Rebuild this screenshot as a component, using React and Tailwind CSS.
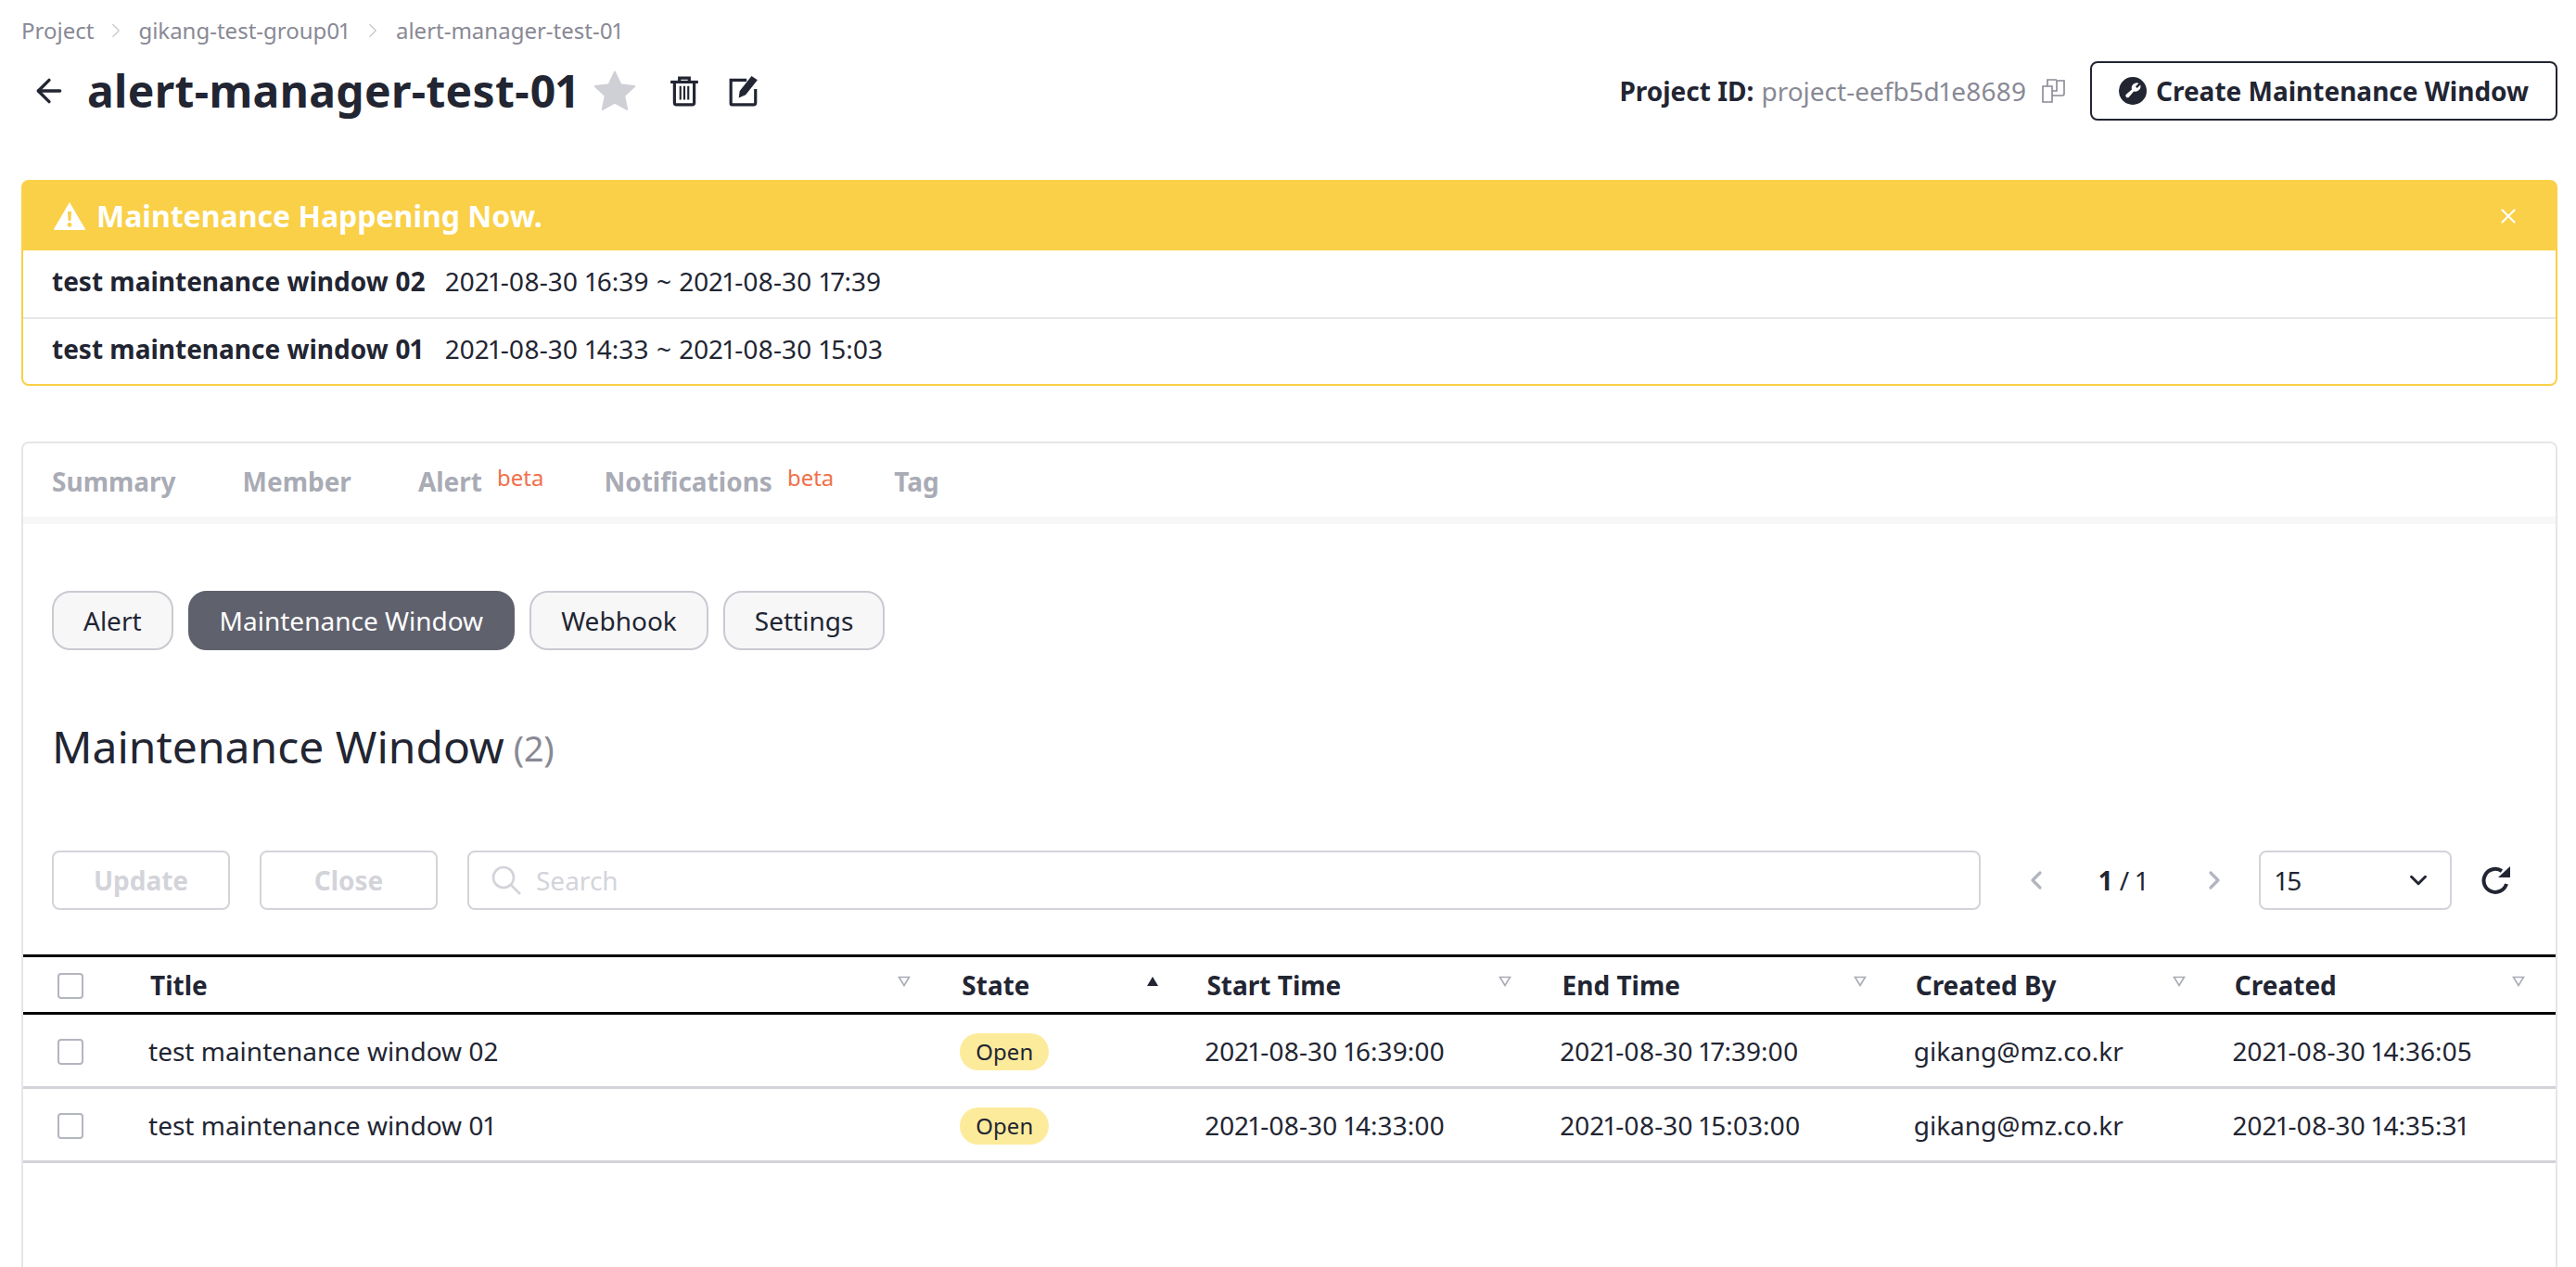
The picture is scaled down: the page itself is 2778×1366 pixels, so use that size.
// Maintenance window tab of a project page
import { ChevronLeft, ChevronRight, ChevronDown, ArrowLeft, X } from 'lucide-react'

const WINDOWS = [
  ['test maintenance window 02', '2021-08-30 16:39 ~ 2021-08-30 17:39'],
  ['test maintenance window 01', '2021-08-30 14:33 ~ 2021-08-30 15:03'],
]

const ROWS = [
  ['test maintenance window 02', '2021-08-30 16:39:00', '2021-08-30 17:39:00', 'gikang@mz.co.kr', '2021-08-30 14:36:05'],
  ['test maintenance window 01', '2021-08-30 14:33:00', '2021-08-30 15:03:00', 'gikang@mz.co.kr', '2021-08-30 14:35:31'],
]

const COLUMNS = [
  ['Title', 'w-[875px] pr-[38px]'],
  ['State', 'w-[264px] pr-[34px]', true],
  ['Start Time', 'w-[383px] pr-[38px]'],
  ['End Time', 'w-[381px] pr-[36px]'],
  ['Created By', 'w-[344px] pr-[36px]'],
  ['Created', 'w-[363px] pr-[33px]'],
]

function SortMark({ active }) {
  return (
    <svg viewBox="0 0 14 12" className="mt-[-8px] h-[12px] w-[14px] shrink-0" aria-hidden="true">
      {active ? (
        <path d="M7 1 L13 11 H1 Z" fill="#222532" />
      ) : (
        <path d="M1.5 1.5 H12.5 L7 10.5 Z" fill="none" stroke="#a9abb5" strokeWidth="1.6" />
      )}
    </svg>
  )
}

function Checkbox() {
  return <span className="mt-[2px] block h-[28px] w-[28px] rounded-[4px] border-2 border-[#b3b5bf] bg-white" />
}

function Pill({ children, active }) {
  return (
    <button
      className={`flex h-[64px] items-center rounded-[20px] border-2 px-[32px] text-[28px] ${
        active ? 'border-[#5f616d] bg-[#5f616d] text-white' : 'border-[#c9cad1] bg-[#f7f7f8] text-[#222532]'
      }`}
    >
      {children}
    </button>
  )
}

function Tab({ children, beta }) {
  return (
    <div className="flex items-start">
      <span className="text-[28px] leading-[38px] font-bold text-[#a9abb5]">{children}</span>
      {beta && <span className="ml-[16px] mr-[-7px] mt-[-2px] text-[24px] leading-[34px] text-[#f0704a]">beta</span>}
    </div>
  )
}

function GhostButton({ children }) {
  return (
    <button className="flex h-[64px] w-[192px] items-center justify-center rounded-[8px] border-2 border-[#d3d4da] text-[28px] font-bold text-[#d3d4da]">
      {children}
    </button>
  )
}

export default function App() {
  return (
    <div className="flex h-screen flex-col overflow-hidden bg-white pl-[23px] pr-[20px] text-[#222532] proportional-nums [font-family:'Noto_Sans',sans-serif]">
      {/* breadcrumb */}
      <nav className="mt-[16px] flex h-[34px] items-center text-[24px] text-[#898995]">
        <span>Project</span>
        <ChevronRight size={26} strokeWidth={1} className="mx-[11px] text-[#c4c5cc]" />
        <span>gikang-test-group01</span>
        <ChevronRight size={26} strokeWidth={1} className="mx-[12px] text-[#c4c5cc]" />
        <span>alert-manager-test-01</span>
      </nav>

      {/* title row */}
      <div className="mt-[8px] flex h-[80px] items-center">
        <ArrowLeft size={40} strokeWidth={2} className="ml-[10px] text-[#222532]" />
        <h1 className="ml-[21px] text-[48px] leading-[66px] font-bold tracking-[0.34px]">alert-manager-test-01</h1>
        <svg viewBox="0 0 24 24" className="ml-[14px] h-[48px] w-[48px]" aria-hidden="true">
          <path
            d="M12 1.8 L15.2 8.6 L22.6 9.5 L17.1 14.6 L18.6 22 L12 18.3 L5.4 22 L6.9 14.6 L1.4 9.5 L8.8 8.6 Z"
            fill="#cfd0d6"
            stroke="#cfd0d6"
            strokeLinejoin="round"
          />
        </svg>
        <svg viewBox="0 0 32 32" className="ml-[34px] h-[34px] w-[34px]" fill="none" stroke="#222532" aria-hidden="true">
          <path d="M2 7 H30" strokeWidth="3" />
          <path d="M11 6 V3 H21 V6" strokeWidth="3" />
          <path d="M6 7 V28 a2 2 0 0 0 2 2 H24 a2 2 0 0 0 2 -2 V7" strokeWidth="3" />
          <path d="M12 11 V25 M16 11 V25 M20 11 V25" strokeWidth="2" />
        </svg>
        <svg viewBox="0 0 32 32" className="ml-[30px] h-[34px] w-[34px]" fill="none" aria-hidden="true">
          <path d="M19 5 H3 V29 a1 1 0 0 0 1 1 H26 a2 2 0 0 0 2 -2 V14" stroke="#222532" strokeWidth="3" />
          <path d="M11 23 L12 16 L24 1 L30 5 L18 20 Z" fill="#222532" />
        </svg>

        <div className="ml-auto flex items-center">
          <span className="text-[28px] font-bold">Project ID:</span>
          <span className="ml-[8px] text-[28px] text-[#898995]">project-eefb5d1e8689</span>
          <svg viewBox="0 0 28 28" className="ml-[16px] h-[28px] w-[28px]" fill="none" stroke="#898995" strokeWidth="1.6" aria-hidden="true">
            <path d="M2 9 H12 V26 H2 Z" />
            <path d="M12 14 H17 V3 H25 V17 a2 2 0 0 1 -2 2 H12" />
            <path d="M7 9 V2 H17" />
          </svg>
          <button className="ml-[25px] flex h-[64px] w-[504px] items-center justify-center rounded-[8px] border-2 border-[#222532] text-[28px] font-bold">
            <svg viewBox="0 0 30 30" className="mr-[10px] h-[30px] w-[30px]" aria-hidden="true">
              <circle cx="15" cy="15" r="15" fill="#222532" />
              <path
                d="M21.5 6.8 L18 10.3 L19.7 12 L23.2 8.5 a5.6 5.6 0 0 1 -7 7 L10.6 22 a2.2 2.2 0 0 1 -3 -3 L14 13.6 a5.6 5.6 0 0 1 7.5 -6.8 Z"
                fill="white"
              />
            </svg>
            Create Maintenance Window
          </button>
        </div>
      </div>

      {/* maintenance notice */}
      <section className="mt-[56px] rounded-[8px] border-2 border-[#f9d047]">
        <div className="flex h-[74px] items-center bg-[#f9d047] pl-[32px] pr-[38px] text-white">
          <svg viewBox="0 0 36 32" className="h-[32px] w-[36px]" aria-hidden="true">
            <path
              fillRule="evenodd"
              d="M18 1 L35 30 a1 1 0 0 1 -1 1 H2 a1 1 0 0 1 -1 -1 Z M16 11 L16.6 21 H19.4 L20 11 Z M18 23 a2.4 2.4 0 1 0 0.01 0 Z"
              fill="white"
            />
          </svg>
          <span className="ml-[11px] text-[32px] font-bold">Maintenance Happening Now.</span>
          <X size={26} strokeWidth={2} className="ml-auto text-white" />
        </div>
        {WINDOWS.map(([name, range], i) => (
          <div key={name} className={`flex h-[72px] items-center pb-[6px] pl-[31px] text-[28px] ${i ? 'border-t-2 border-[#e6e6ea]' : ''}`}>
            <span className="w-[424px] font-bold">{name}</span>
            <span className="[word-spacing:1.2px]">{range}</span>
          </div>
        ))}
      </section>

      {/* tabs card */}
      <section className="mt-[60px] flex min-h-0 flex-1 flex-col rounded-t-[8px] border-2 border-b-0 border-[#e6e6ea]">
        <div className="flex h-[79px] items-center gap-x-[72px] pl-[31px] pt-[2px]">
          <Tab>Summary</Tab>
          <Tab>Member</Tab>
          <Tab beta>Alert</Tab>
          <Tab beta>Notifications</Tab>
          <Tab>Tag</Tab>
        </div>
        <div className="h-[8px] bg-[#f7f7f8]" />

        <div className="mt-[72px] flex gap-[16px] pl-[31px]">
          <Pill>Alert</Pill>
          <Pill active>Maintenance Window</Pill>
          <Pill>Webhook</Pill>
          <Pill>Settings</Pill>
        </div>

        <div className="mt-[71px] flex items-center pl-[31px]">
          <h2 className="text-[48px] leading-[66px]">Maintenance Window</h2>
          <span className="ml-[10px] mt-[2px] text-[38px] text-[#898995]">(2)</span>
        </div>

        {/* toolbar */}
        <div className="mt-[79px] flex items-center pl-[31px]">
          <GhostButton>Update</GhostButton>
          <div className="ml-[32px]">
            <GhostButton>Close</GhostButton>
          </div>
          <div className="ml-[32px] flex h-[64px] w-[1632px] items-center rounded-[8px] border-2 border-[#d3d4da] pl-[24px] text-[28px] text-[#d3d4da]">
            <svg viewBox="0 0 32 32" className="mr-[16px] h-[32px] w-[32px]" fill="none" stroke="#d3d4da" strokeWidth="2.6" aria-hidden="true">
              <circle cx="13" cy="13" r="11" />
              <path d="M21 21 L31 31" />
            </svg>
            Search
          </div>
          <ChevronLeft size={32} strokeWidth={2.4} className="ml-[44px] text-[#b3b5bf]" />
          <div className="ml-[52px] w-[70px] text-[28px]">
            <span className="font-bold">1</span> / 1
          </div>
          <ChevronRight size={32} strokeWidth={2.4} className="ml-[38px] text-[#b3b5bf]" />
          <div className="ml-[32px] flex h-[64px] w-[208px] items-center justify-between rounded-[8px] border-2 border-[#d3d4da] pl-[16px] pr-[19px] text-[28px]">
            15
            <ChevronDown size={30} strokeWidth={2.4} />
          </div>
          <svg viewBox="0 0 32 32" className="ml-[32px] h-[32px] w-[32px]" fill="none" aria-hidden="true">
            <path d="M27 20 A12.5 12.5 0 1 1 22 6" stroke="#222532" strokeWidth="4" />
            <path d="M18 13 L31 13 L31 1 Z" fill="#222532" />
          </svg>
        </div>

        {/* table */}
        <table className="mt-[48px] w-full table-fixed border-collapse text-[28px]">
          <thead>
            <tr className="h-[62px] border-y-[3px] border-black">
              <th className="w-[120px] pl-[37px] text-left">
                <Checkbox />
              </th>
              {COLUMNS.map(([label, width, active]) => (
                <th key={label} className={`${width} pl-[17px] text-left font-bold`}>
                  <div className="flex items-center justify-between">
                    {label}
                    <SortMark active={active} />
                  </div>
                </th>
              ))}
            </tr>
          </thead>
          <tbody>
            {ROWS.map((row) => (
              <tr key={row[0]} className="h-[80px] border-b-[3px] border-[#d3d4da]">
                <td className="pl-[37px]">
                  <Checkbox />
                </td>
                <td className="pl-[15px]">{row[0]}</td>
                <td className="pl-[15px]">
                  <span className="inline-flex h-[40px] items-center rounded-full bg-[#fdeb9c] px-[17px] text-[24px]">Open</span>
                </td>
                <td className="pl-[15px]">{row[1]}</td>
                <td className="pl-[15px]">{row[2]}</td>
                <td className="pl-[15px]">{row[3]}</td>
                <td className="pl-[15px]">{row[4]}</td>
              </tr>
            ))}
          </tbody>
        </table>
      </section>
    </div>
  )
}
